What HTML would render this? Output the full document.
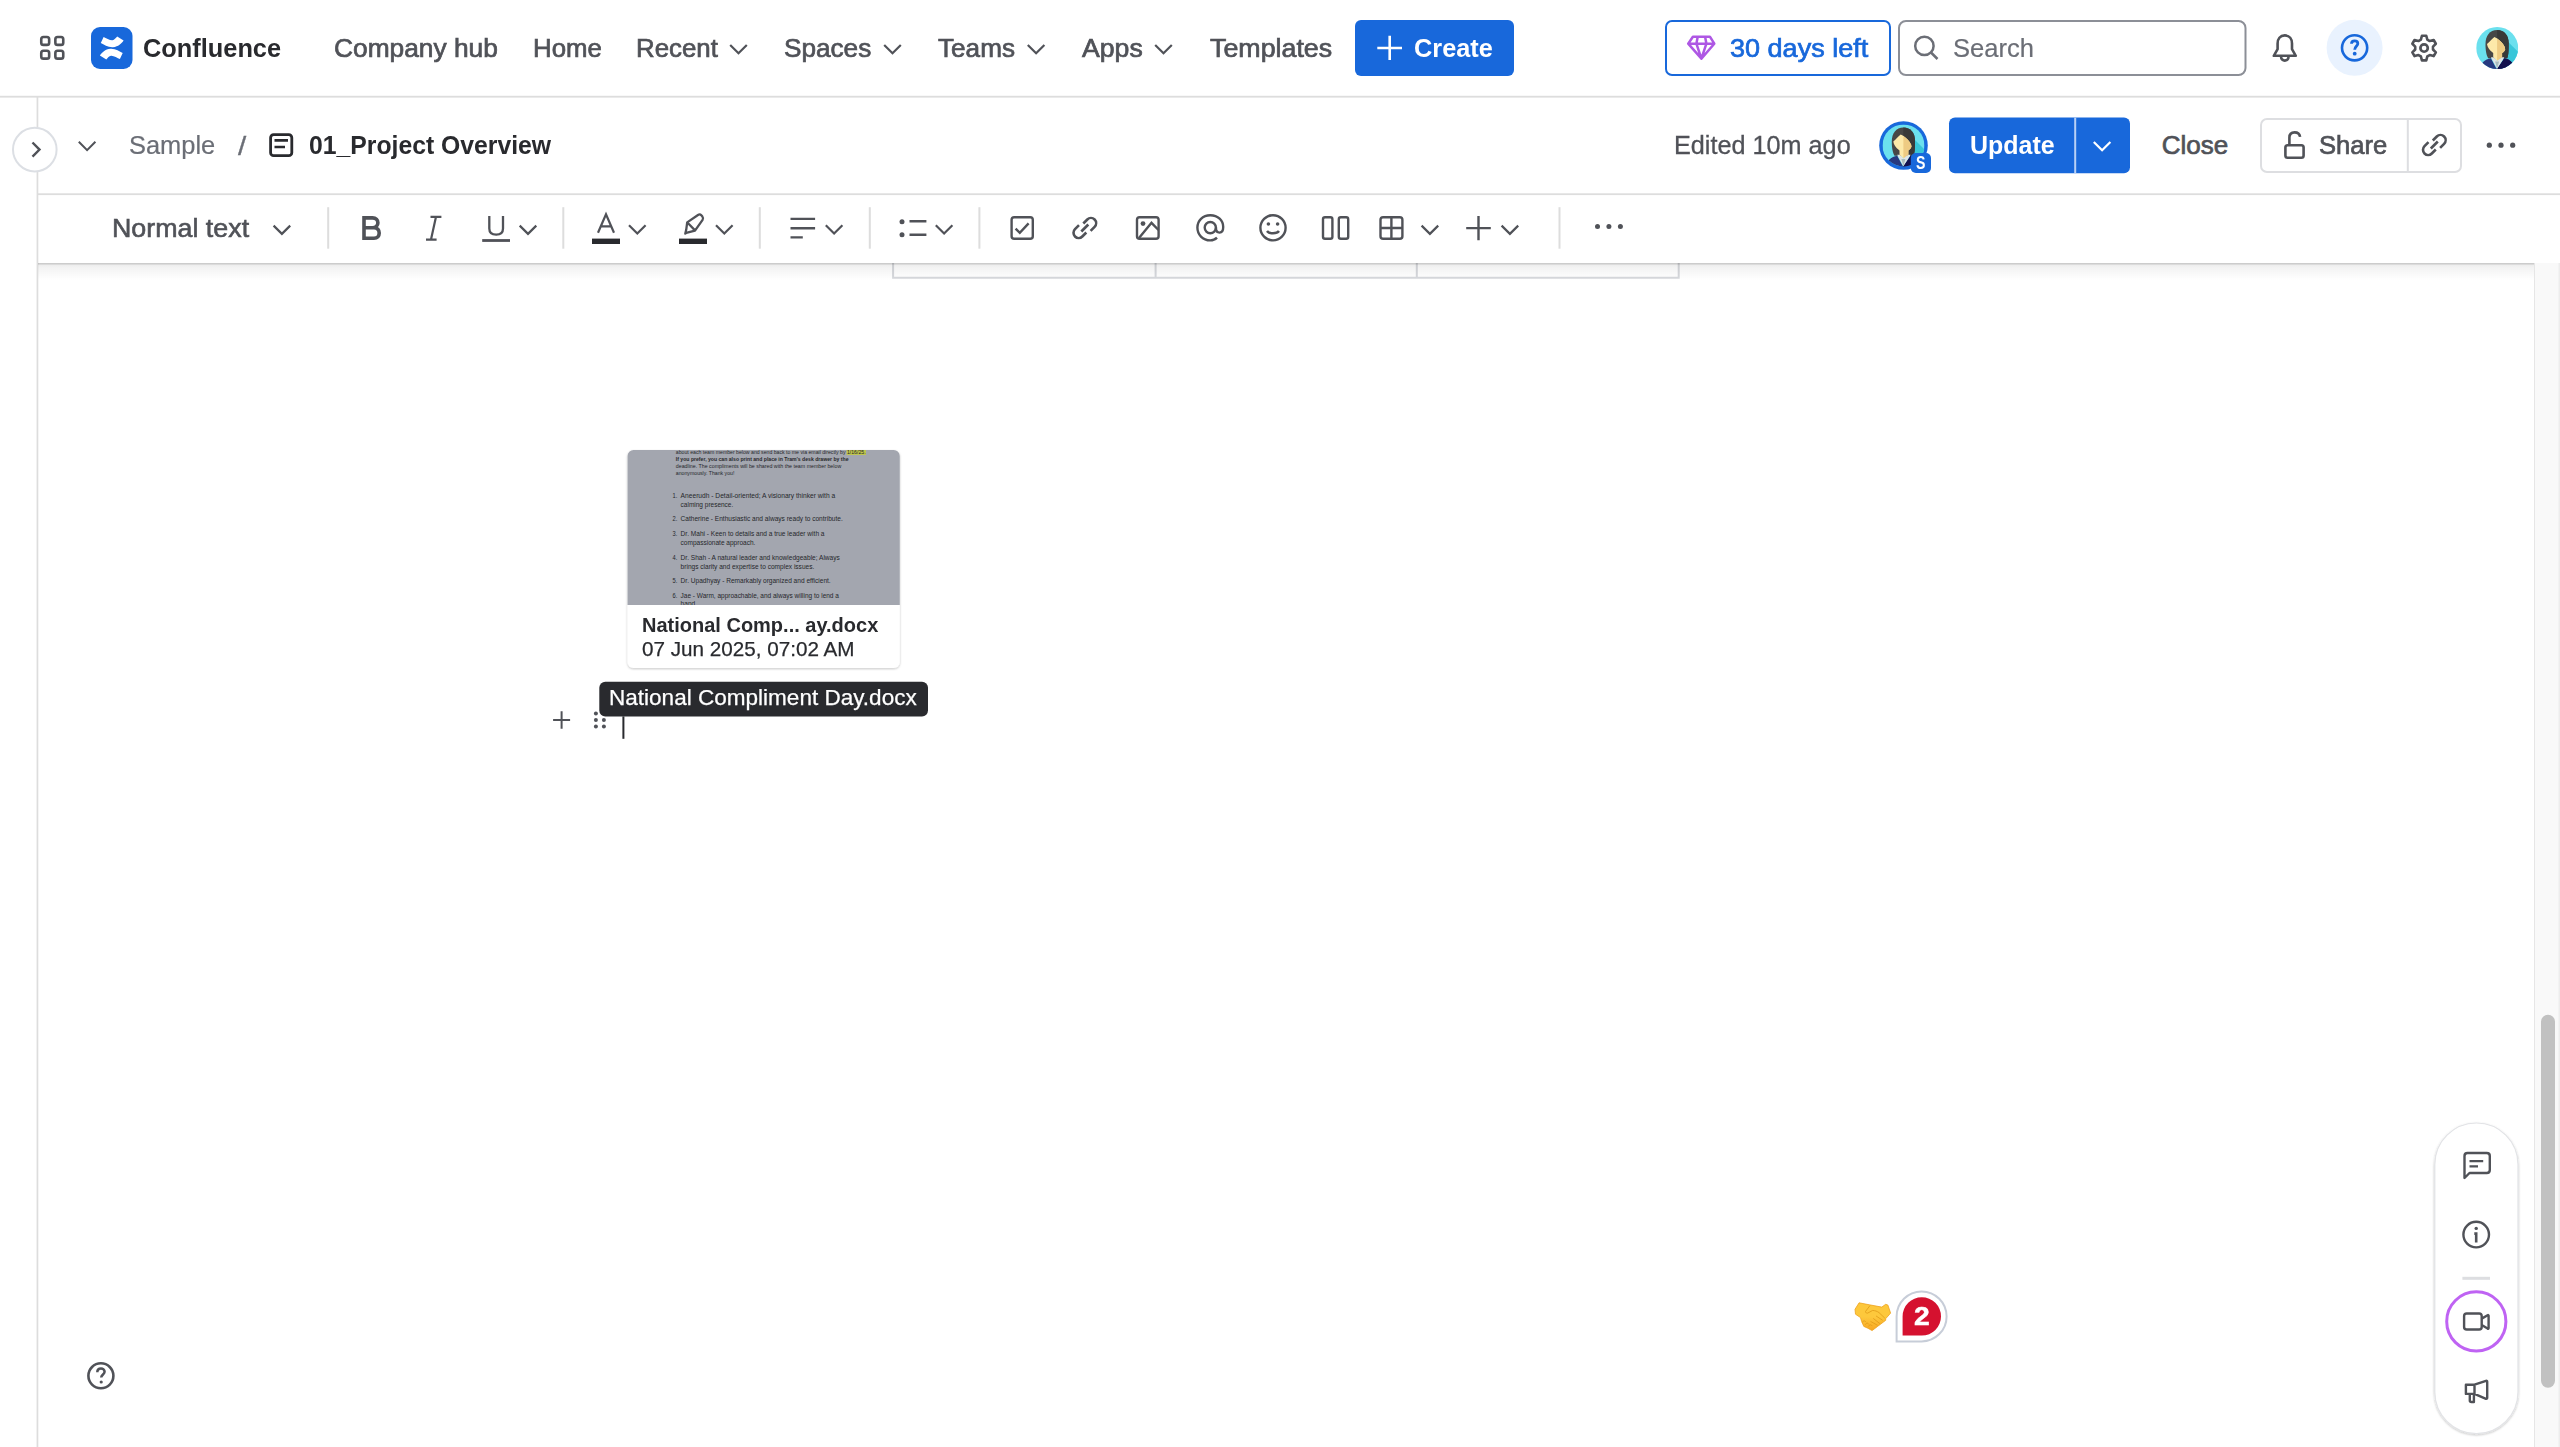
<!DOCTYPE html>
<html><head><meta charset="utf-8"><style>
html,body{margin:0;padding:0;background:#fff;width:2560px;height:1447px;overflow:hidden}
.t{position:absolute;white-space:nowrap;line-height:1;font-family:"Liberation Sans",sans-serif;transform-origin:0 0}
svg{position:absolute;left:0;top:0}
</style></head><body>
<svg width="2560" height="1447" viewBox="0 0 2560 1447" font-family="Liberation Sans">
<rect x="0" y="95.8" width="2560" height="1.8" fill="#DDDDDD"/>
<rect x="36.6" y="97" width="1.7" height="1350" fill="#DDDDDD"/>
<rect x="37" y="193.3" width="2523" height="1.8" fill="#DDDDDD"/>
<defs><linearGradient id="sh" x1="0" y1="0" x2="0" y2="1"><stop offset="0" stop-color="#000" stop-opacity="0.09"/><stop offset="0.25" stop-color="#000" stop-opacity="0.05"/><stop offset="1" stop-color="#000" stop-opacity="0"/></linearGradient></defs>
<rect x="41.25" y="36.95" width="7.9" height="7.9" rx="2.2" fill="none" stroke="#505258" stroke-width="2.6"/>
<rect x="55.35" y="36.95" width="7.9" height="7.9" rx="2.2" fill="none" stroke="#505258" stroke-width="2.6"/>
<rect x="41.25" y="50.75" width="7.9" height="7.9" rx="2.2" fill="none" stroke="#505258" stroke-width="2.6"/>
<rect x="55.35" y="50.75" width="7.9" height="7.9" rx="2.2" fill="none" stroke="#505258" stroke-width="2.6"/>
<rect x="91" y="27" width="41.5" height="42" rx="9" fill="#1868DB"/>
<g transform="translate(91 27)"><path d="M9.8 16 L12.6 10 C15 11 19 13.6 21.5 13.3 C23.5 13 24.6 11.2 26.2 9.6 L32.6 13.6 C30.4 16.6 27.5 19.8 22 20.3 C17 20.6 13 17.6 9.8 16 Z" fill="#fff"/><path d="M9.8 16 L12.6 10 C15 11 19 13.6 21.5 13.3 C23.5 13 24.6 11.2 26.2 9.6 L32.6 13.6 C30.4 16.6 27.5 19.8 22 20.3 C17 20.6 13 17.6 9.8 16 Z" fill="#fff" transform="rotate(180 20.75 21)"/></g>
<path d="M730.2 45 l8.3 8.3 l8.3 -8.3" fill="none" stroke="#505258" stroke-width="2.2"/>
<path d="M884.2 45 l8.3 8.3 l8.3 -8.3" fill="none" stroke="#505258" stroke-width="2.2"/>
<path d="M1027.8 45 l8.3 8.3 l8.3 -8.3" fill="none" stroke="#505258" stroke-width="2.2"/>
<path d="M1155.2 45 l8.3 8.3 l8.3 -8.3" fill="none" stroke="#505258" stroke-width="2.2"/>
<rect x="1355" y="20" width="159" height="56" rx="6" fill="#1868DB"/>
<path d="M1389.7 35.8 V60 M1377.3 48 H1402" stroke="#fff" stroke-width="2.6"/>
<rect x="1666" y="21" width="224" height="54" rx="6" fill="none" stroke="#1868DB" stroke-width="2"/>
<g fill="none" stroke="#AE57E4" stroke-width="2.5" stroke-linejoin="round"><path d="M1692.9 36.7 H1709.9 L1714.3 43.7 L1701.4 58.6 L1688.2 43.7 Z M1688.2 43.7 H1714.3 M1697.7 36.7 L1696.4 43.7 L1701.4 58.6 L1706.4 43.7 L1705.1 36.7"/></g>
<rect x="1899" y="21" width="346.5" height="54" rx="7" fill="none" stroke="#8C8F97" stroke-width="2"/>
<circle cx="1924.4" cy="45.9" r="9.2" fill="none" stroke="#6B6E76" stroke-width="2.5"/><path d="M1931 52.5 L1937.5 59" stroke="#6B6E76" stroke-width="2.5"/>
<path d="M2284.8 35.4 C2280 35.4 2277.6 39 2277.6 43.5 V49.2 L2273.8 55.8 H2295.8 L2292 49.2 V43.5 C2292 39 2289.6 35.4 2284.8 35.4 Z M2281.1 56.9 A3.7 3.7 0 0 0 2288.5 56.9" fill="none" stroke="#505258" stroke-width="2.6" stroke-linejoin="round"/>
<circle cx="2354.6" cy="47.8" r="28" fill="#E9F2FE"/>
<circle cx="2354.6" cy="47.8" r="12.6" fill="none" stroke="#1868DB" stroke-width="2.6"/>
<path d="M2351.5 43.8 C2351.5 41.7 2352.9 40.9 2354.6 40.9 C2356.5 40.9 2357.8 42 2357.8 43.7 C2357.8 45.8 2354.7 46.4 2354.7 49.8" fill="none" stroke="#1868DB" stroke-width="2.8"/><circle cx="2354.7" cy="53.7" r="1.9" fill="#1868DB"/>
<path d="M2420.87 39.65 L2421.93 35.74 L2426.27 35.74 L2427.33 39.65 L2429.76 41.06 L2433.68 40.02 L2435.85 43.77 L2432.99 46.64 L2432.99 49.46 L2435.85 52.33 L2433.68 56.08 L2429.76 55.04 L2427.33 56.45 L2426.27 60.36 L2421.93 60.36 L2420.87 56.45 L2418.44 55.04 L2414.52 56.08 L2412.35 52.33 L2415.21 49.46 L2415.21 46.64 L2412.35 43.77 L2414.52 40.02 L2418.44 41.06 Z" fill="none" stroke="#505258" stroke-width="2.6" stroke-linejoin="round"/><circle cx="2424.1" cy="48.05" r="3.7" fill="none" stroke="#505258" stroke-width="2.7"/>
<g transform="translate(2476.2 27) scale(1.0)"><clipPath id="av2476"><circle cx="21" cy="21" r="21"/></clipPath><g clip-path="url(#av2476)">
<rect width="42" height="42" fill="#6BE0EE"/><path d="M31 14 L50 33 L42 44 L30 44 Z" fill="#38C6D9"/>
<path d="M20.9 3.1 C13.5 3.1 9.3 9 9.3 17 C9.3 24 10.2 28 12 31.3 H31 C32.3 28 32.5 24 32.5 16.3 C32.5 8.5 28 3.1 20.9 3.1 Z" fill="#474747"/>
<path d="M20.9 3.1 C28 3.1 32.5 8.5 32.5 16.3 C32.5 24 32.3 28 31 31.3 H20.9 Z" fill="#393939"/>
<path d="M10.8 17 C13.5 14.5 16 12 18.2 10 C22 11.5 26.5 15.5 28.6 20.1 L29 22.4 C28 24.5 27 25.5 25.9 26 V30.2 L20.9 34 L17 30.2 V26 C15 24.5 13.5 23 12.4 21.3 C11.6 20 11 18.5 10.8 17 Z" fill="#FDE9A9"/>
<path d="M20.9 11.8 C24 13.5 27.2 16.8 28.6 20.1 L29 22.4 C28 24.5 27 25.5 25.9 26 V30.2 L20.9 34 Z" fill="#EECB83"/>
<path d="M6.6 35.2 C9 33 12 31.8 14.7 31.3 L20.1 41.4 L21.7 41.4 L28.1 31.3 C31 31.8 33.5 33 35.6 35.2 L38 44 H4 Z" fill="#27397F"/>
<path d="M20.9 41.4 L28.1 31.3 C31 31.8 33.5 33 35.6 35.2 L38 44 H20.9 Z" fill="#13114E"/>
<path d="M14.7 30.2 L17 30.2 L20.9 34 L25.9 30.2 L28.1 30.2 L20.9 41.8 Z" fill="#E1E5E6"/>
<path d="M18.9 34.5 H22.9 L20.9 41.8 Z" fill="#A9BDBE"/>
</g></g>
<circle cx="34.8" cy="149.6" r="21.8" fill="#fff" stroke="#DCDFE4" stroke-width="2"/>
<path d="M32.5 142.5 L39.5 149.6 L32.5 156.7" fill="none" stroke="#505258" stroke-width="2.4"/>
<path d="M78.8 141.8 l8.3 8.3 l8.3 -8.3" fill="none" stroke="#505258" stroke-width="2"/>
<rect x="270.6" y="134.7" width="21.2" height="21" rx="3" fill="none" stroke="#292A2E" stroke-width="2.8"/><path d="M274.5 140.4 H288 M274.5 147 H285" stroke="#292A2E" stroke-width="2.6"/>
<circle cx="1903.5" cy="145.45" r="24.3" fill="#1868DB"/>
<g transform="translate(1882.5 124.44999999999999) scale(1.0)"><clipPath id="av1882"><circle cx="21" cy="21" r="21"/></clipPath><g clip-path="url(#av1882)">
<rect width="42" height="42" fill="#6BE0EE"/><path d="M31 14 L50 33 L42 44 L30 44 Z" fill="#38C6D9"/>
<path d="M20.9 3.1 C13.5 3.1 9.3 9 9.3 17 C9.3 24 10.2 28 12 31.3 H31 C32.3 28 32.5 24 32.5 16.3 C32.5 8.5 28 3.1 20.9 3.1 Z" fill="#474747"/>
<path d="M20.9 3.1 C28 3.1 32.5 8.5 32.5 16.3 C32.5 24 32.3 28 31 31.3 H20.9 Z" fill="#393939"/>
<path d="M10.8 17 C13.5 14.5 16 12 18.2 10 C22 11.5 26.5 15.5 28.6 20.1 L29 22.4 C28 24.5 27 25.5 25.9 26 V30.2 L20.9 34 L17 30.2 V26 C15 24.5 13.5 23 12.4 21.3 C11.6 20 11 18.5 10.8 17 Z" fill="#FDE9A9"/>
<path d="M20.9 11.8 C24 13.5 27.2 16.8 28.6 20.1 L29 22.4 C28 24.5 27 25.5 25.9 26 V30.2 L20.9 34 Z" fill="#EECB83"/>
<path d="M6.6 35.2 C9 33 12 31.8 14.7 31.3 L20.1 41.4 L21.7 41.4 L28.1 31.3 C31 31.8 33.5 33 35.6 35.2 L38 44 H4 Z" fill="#27397F"/>
<path d="M20.9 41.4 L28.1 31.3 C31 31.8 33.5 33 35.6 35.2 L38 44 H20.9 Z" fill="#13114E"/>
<path d="M14.7 30.2 L17 30.2 L20.9 34 L25.9 30.2 L28.1 30.2 L20.9 41.8 Z" fill="#E1E5E6"/>
<path d="M18.9 34.5 H22.9 L20.9 41.8 Z" fill="#A9BDBE"/>
</g></g>
<rect x="1910.8" y="153.1" width="20.2" height="19.9" rx="5" fill="#1868DB"/>
<rect x="1949" y="117.6" width="181" height="55.6" rx="6" fill="#1868DB"/>
<rect x="2074.2" y="117.6" width="2" height="55.6" fill="#B8D0F5"/>
<path d="M2093.8 142 l8.3 8.3 l8.3 -8.3" fill="none" stroke="#fff" stroke-width="2.2"/>
<rect x="2261" y="119" width="200" height="53" rx="6" fill="none" stroke="#DDDEE1" stroke-width="2"/>
<rect x="2406.8" y="119" width="2" height="53" fill="#DDDEE1"/>
<path d="M2289.4 145 V137.6 C2289.4 134.1 2291.5 132.4 2294.6 132.4 C2297.6 132.4 2299.7 134.1 2300.1 136.9" fill="none" stroke="#505258" stroke-width="2.6"/><rect x="2285.4" y="145.2" width="18.2" height="12.6" rx="2.2" fill="none" stroke="#505258" stroke-width="2.6"/>
<g transform="translate(2422.3 133) scale(1)" fill="none" stroke="#505258" stroke-width="2.6" stroke-linecap="butt"><path d="M10.5 7.5 L14.5 3.5 C16.5 1.5 19.8 1.5 21.8 3.5 C23.8 5.5 23.8 8.8 21.8 10.8 L17.8 14.8"/><path d="M13.5 16.5 L9.5 20.5 C7.5 22.5 4.2 22.5 2.2 20.5 C0.2 18.5 0.2 15.2 2.2 13.2 L6.2 9.2"/><path d="M8.5 15.5 L15.5 8.5"/></g>
<circle cx="2489.3" cy="145.2" r="2.6" fill="#505258"/>
<circle cx="2501" cy="145.2" r="2.6" fill="#505258"/>
<circle cx="2512.7" cy="145.2" r="2.6" fill="#505258"/>
<rect x="327.2" y="207.2" width="2" height="41.5" fill="#DDDDDD"/>
<rect x="562.3" y="207.2" width="2" height="41.5" fill="#DDDDDD"/>
<rect x="758.8" y="207.2" width="2" height="41.5" fill="#DDDDDD"/>
<rect x="868.8" y="207.2" width="2" height="41.5" fill="#DDDDDD"/>
<rect x="978.4" y="207.2" width="2" height="41.5" fill="#DDDDDD"/>
<rect x="1558.5" y="207.2" width="2" height="41.5" fill="#DDDDDD"/>
<path d="M273.6 225.6 l8.3 8.3 l8.3 -8.3" fill="none" stroke="#505258" stroke-width="2.2"/>
<path d="M364 238.3 V217.9 H372.5 C376 217.9 377.9 220 377.9 222.8 C377.9 225.6 376 227.7 372.5 227.7 H364 M372.5 227.7 H374 C377.4 227.7 379.2 230 379.2 233 C379.2 236 377.4 238.3 374 238.3 H364" fill="none" stroke="#505258" stroke-width="3.6" stroke-linecap="square"/>
<path d="M430.5 216.8 H441.4 M426 239.6 H436.6 M436 216.8 L431 239.6" fill="none" stroke="#505258" stroke-width="2.2"/>
<path d="M489.3 216 V228.5 C489.3 232.8 492.5 234.6 496.2 234.6 C499.8 234.6 503 232.8 503 228.5 V216" fill="none" stroke="#505258" stroke-width="2.3"/><rect x="482.2" y="239.1" width="27.8" height="2.8" fill="#505258"/>
<path d="M519.7 225.6 l8.3 8.3 l8.3 -8.3" fill="none" stroke="#505258" stroke-width="2.2"/>
<path d="M598 232.8 L606 214.2 L614 232.8 M600.6 226.4 H611.4" fill="none" stroke="#505258" stroke-width="2.2"/><rect x="592" y="238.6" width="28" height="5.4" fill="#292A2E"/>
<path d="M629 225.2 l8.3 8.3 l8.3 -8.3" fill="none" stroke="#505258" stroke-width="2.2"/>
<path d="M687.2 222.4 L698 215 C699.2 214.2 700.5 214.4 701.3 215.3 L702.4 216.6 C703.2 217.6 703.3 218.8 702.6 219.8 L695 230.6 L687.2 232.6 L685.3 233.6 L686.2 229.8 Z M687.6 222.8 L695 230.4" fill="none" stroke="#505258" stroke-width="2.3" stroke-linejoin="round"/><rect x="679" y="238.6" width="28" height="5.4" fill="#292A2E"/>
<path d="M716 225.2 l8.3 8.3 l8.3 -8.3" fill="none" stroke="#505258" stroke-width="2.2"/>
<path d="M790.5 218.9 H815.1 M790.5 228.2 H815.1 M790.5 237.4 H802.8" stroke="#505258" stroke-width="2.4"/>
<path d="M825.8 225.2 l8.3 8.3 l8.3 -8.3" fill="none" stroke="#505258" stroke-width="2.2"/>
<circle cx="902" cy="221.8" r="2.5" fill="#505258"/><circle cx="902" cy="234.7" r="2.5" fill="#505258"/><path d="M909.5 221.3 H926.4 M909.5 234.8 H926.4" stroke="#505258" stroke-width="2.4"/>
<path d="M935.8 225.2 l8.3 8.3 l8.3 -8.3" fill="none" stroke="#505258" stroke-width="2.2"/>
<rect x="1011.6" y="217.2" width="21.2" height="21.6" rx="2.6" fill="none" stroke="#505258" stroke-width="2.4"/><path d="M1015.6 228.6 L1019.8 232.8 L1028.6 223.4" fill="none" stroke="#505258" stroke-width="2.4"/>
<g transform="translate(1072.8 216) scale(1)" fill="none" stroke="#505258" stroke-width="2.6" stroke-linecap="butt"><path d="M10.5 7.5 L14.5 3.5 C16.5 1.5 19.8 1.5 21.8 3.5 C23.8 5.5 23.8 8.8 21.8 10.8 L17.8 14.8"/><path d="M13.5 16.5 L9.5 20.5 C7.5 22.5 4.2 22.5 2.2 20.5 C0.2 18.5 0.2 15.2 2.2 13.2 L6.2 9.2"/><path d="M8.5 15.5 L15.5 8.5"/></g>
<rect x="1137" y="217.2" width="21.6" height="21.6" rx="2.6" fill="none" stroke="#505258" stroke-width="2.4"/><circle cx="1143" cy="223.6" r="2.4" fill="#505258"/><path d="M1139 238 L1151.5 222.8 L1158.5 230" fill="none" stroke="#505258" stroke-width="2.4"/>
<path d="M1217 237.6 C1215 239.6 1212.7 240.4 1210.3 240.4 C1202.6 240.4 1197.4 234.6 1197.4 227.6 C1197.4 220.6 1202.6 215.2 1210.3 215.2 C1218 215.2 1223.2 220.6 1223.2 227 C1223.2 230.8 1221.6 232.6 1219.6 232.6 C1217.6 232.6 1216 231.4 1216 228.6 V227.6" fill="none" stroke="#505258" stroke-width="2.4"/><circle cx="1210.3" cy="227.6" r="5.6" fill="none" stroke="#505258" stroke-width="2.4"/>
<circle cx="1273" cy="227.8" r="12.6" fill="none" stroke="#505258" stroke-width="2.4"/><circle cx="1268.4" cy="224" r="1.8" fill="#505258"/><circle cx="1277.6" cy="224" r="1.8" fill="#505258"/><path d="M1267 231 C1269 234 1277 234 1279 231" fill="none" stroke="#505258" stroke-width="2.4"/>
<rect x="1323" y="217.2" width="9.4" height="21.6" rx="2" fill="none" stroke="#505258" stroke-width="2.4"/><rect x="1338.8" y="217.2" width="9.4" height="21.6" rx="2" fill="none" stroke="#505258" stroke-width="2.4"/>
<rect x="1380.5" y="217.2" width="21.9" height="21.6" rx="2.6" fill="none" stroke="#505258" stroke-width="2.4"/><path d="M1391.4 217.2 V238.8 M1380.5 228 H1402.4" stroke="#505258" stroke-width="2.4"/>
<path d="M1421.6 225.6 l8.3 8.3 l8.3 -8.3" fill="none" stroke="#505258" stroke-width="2.2"/>
<path d="M1478.5 216 V240.2 M1466.2 228.1 H1490.8" stroke="#505258" stroke-width="2.4"/>
<path d="M1501.6 225.6 l8.3 8.3 l8.3 -8.3" fill="none" stroke="#505258" stroke-width="2.2"/>
<circle cx="1597.5" cy="226.5" r="2.5" fill="#505258"/>
<circle cx="1608.9" cy="226.5" r="2.5" fill="#505258"/>
<circle cx="1620.4" cy="226.5" r="2.5" fill="#505258"/>
<path d="M893.1 263 V277.8 H1678.7 V263 M1155.6 263 V277.8 M1416.8 263 V277.8" fill="none" stroke="#D6D8DC" stroke-width="2"/>
<rect x="38" y="263" width="2522" height="17" fill="url(#sh)"/><rect x="38" y="263" width="2522" height="1.6" fill="#000" opacity="0.12"/>
<defs><filter id="cs" x="-10%" y="-10%" width="120%" height="130%"><feDropShadow dx="0" dy="1" stdDeviation="1" flood-color="#1E1F21" flood-opacity="0.25"/></filter></defs>
<rect x="627.5" y="450" width="272.3" height="218" rx="6" fill="#fff" filter="url(#cs)"/>
<clipPath id="cimg"><path d="M627.5 605 V456 A6 6 0 0 1 633.5 450 H893.8 A6 6 0 0 1 899.8 456 V605 Z"/></clipPath>
<g clip-path="url(#cimg)"><rect x="627" y="450" width="273" height="155" fill="#A3A6AF"/>
<rect x="846.5" y="447.5" width="19.5" height="7.5" fill="#C8CF2E" opacity="0.75"/>
<text x="675.8" y="453.5" font-family="Liberation Sans" font-size="6.2" fill="#26272B" textLength="189.8" lengthAdjust="spacingAndGlyphs" >about each team member below and send back to me via email directly by 1/16/25.</text>
<text x="675.8" y="460.8" font-family="Liberation Sans" font-size="6.2" fill="#26272B" textLength="172.7" lengthAdjust="spacingAndGlyphs" font-weight="bold">If you prefer, you can also print and place in Tram’s desk drawer by the</text>
<text x="675.8" y="467.6" font-family="Liberation Sans" font-size="6.2" fill="#26272B" textLength="165.4" lengthAdjust="spacingAndGlyphs" >deadline. The compliments will be shared with the team member below</text>
<text x="675.8" y="474.9" font-family="Liberation Sans" font-size="6.2" fill="#26272B" textLength="58.6" lengthAdjust="spacingAndGlyphs" >anonymously. Thank you!</text>
<text x="672.6" y="498" font-family="Liberation Sans" font-size="7.2" fill="#26272B" textLength="4.8" lengthAdjust="spacingAndGlyphs" >1.</text>
<text x="680.6" y="498" font-family="Liberation Sans" font-size="7.2" fill="#26272B" textLength="154.6" lengthAdjust="spacingAndGlyphs" >Aneerudh - Detail-oriented; A visionary thinker with a</text>
<text x="680.6" y="507.1" font-family="Liberation Sans" font-size="7.2" fill="#26272B" textLength="52.7" lengthAdjust="spacingAndGlyphs" >calming presence.</text>
<text x="672.6" y="521.2" font-family="Liberation Sans" font-size="7.2" fill="#26272B" textLength="4.8" lengthAdjust="spacingAndGlyphs" >2.</text>
<text x="680.6" y="521.2" font-family="Liberation Sans" font-size="7.2" fill="#26272B" textLength="162.2" lengthAdjust="spacingAndGlyphs" >Catherine - Enthusiastic and always ready to contribute.</text>
<text x="672.6" y="536" font-family="Liberation Sans" font-size="7.2" fill="#26272B" textLength="4.8" lengthAdjust="spacingAndGlyphs" >3.</text>
<text x="680.6" y="536" font-family="Liberation Sans" font-size="7.2" fill="#26272B" textLength="143.9" lengthAdjust="spacingAndGlyphs" >Dr. Mahi - Keen to details and a true leader with a</text>
<text x="680.6" y="544.5" font-family="Liberation Sans" font-size="7.2" fill="#26272B" textLength="74.8" lengthAdjust="spacingAndGlyphs" >compassionate approach.</text>
<text x="672.6" y="559.6" font-family="Liberation Sans" font-size="7.2" fill="#26272B" textLength="4.8" lengthAdjust="spacingAndGlyphs" >4.</text>
<text x="680.6" y="559.6" font-family="Liberation Sans" font-size="7.2" fill="#26272B" textLength="159.2" lengthAdjust="spacingAndGlyphs" >Dr. Shah - A natural leader and knowledgeable; Always</text>
<text x="680.6" y="568.7" font-family="Liberation Sans" font-size="7.2" fill="#26272B" textLength="133.7" lengthAdjust="spacingAndGlyphs" >brings clarity and expertise to complex issues.</text>
<text x="672.6" y="582.8" font-family="Liberation Sans" font-size="7.2" fill="#26272B" textLength="4.8" lengthAdjust="spacingAndGlyphs" >5.</text>
<text x="680.6" y="582.8" font-family="Liberation Sans" font-size="7.2" fill="#26272B" textLength="150.1" lengthAdjust="spacingAndGlyphs" >Dr. Upadhyay - Remarkably organized and efficient.</text>
<text x="672.6" y="597.7" font-family="Liberation Sans" font-size="7.2" fill="#26272B" textLength="4.8" lengthAdjust="spacingAndGlyphs" >6.</text>
<text x="680.6" y="597.7" font-family="Liberation Sans" font-size="7.2" fill="#26272B" textLength="158.3" lengthAdjust="spacingAndGlyphs" >Jae - Warm, approachable, and always willing to lend a</text>
<text x="680.6" y="606.1" font-family="Liberation Sans" font-size="7.2" fill="#26272B" textLength="16.4" lengthAdjust="spacingAndGlyphs" >hand.</text>
</g>
<rect x="599.3" y="681.8" width="328.7" height="34.6" rx="6" fill="#292A2E"/>
<path d="M561.6 711.3 V728.7 M553.1 720 H570.1" stroke="#505258" stroke-width="2"/>
<circle cx="595.9" cy="713.5" r="2" fill="#505258"/>
<circle cx="595.9" cy="720.1" r="2" fill="#505258"/>
<circle cx="603.9" cy="720.1" r="2" fill="#505258"/>
<circle cx="595.9" cy="726.6" r="2" fill="#505258"/>
<circle cx="603.9" cy="726.6" r="2" fill="#505258"/>
<rect x="622.4" y="716.4" width="2" height="22.4" fill="#292A2E"/>
<circle cx="100.9" cy="1375.8" r="12.5" fill="none" stroke="#505258" stroke-width="2.6"/><path d="M97.3 1372.2 C97.3 1369.6 99 1368.4 101 1368.4 C103 1368.4 104.6 1369.8 104.6 1371.8 C104.6 1374.4 101.2 1374.6 101.2 1377.6" fill="none" stroke="#505258" stroke-width="2.5"/><circle cx="101.2" cy="1382" r="1.6" fill="#505258"/>
<defs><linearGradient id="hs" x1="0" y1="0" x2="0" y2="1"><stop offset="0.5" stop-color="#FDC83C"/><stop offset="1" stop-color="#F8A623"/></linearGradient></defs>
<g transform="translate(1850 1296)"><path d="M9.1 6.8 L19.4 8.8 L31.8 11.1 L35.7 8.3 L37.9 9.1 L40.6 17.1 L35.7 22.7 V24.3 L27.6 30.4 L22.1 34.6 L18 32.3 L13.8 30.4 L11.6 25.4 L10.5 21.6 L5.5 18.2 L5 13.3 Z" fill="url(#hs)" stroke="#EDA21E" stroke-width="0.8" stroke-linejoin="round"/><path d="M19.9 9.7 L15.5 15.5 C15.5 16.8 16.5 17.3 17.7 17.1 L22.7 14.4 C25 14.6 27 15.2 29 16.6 L34.8 22.1 M26 19.9 L32.6 24.3 M23.2 22.4 L29.9 27.6 M20.5 25.4 L27.6 29.3 M12.3 26.6 C13 24.3 15.2 24.5 15.8 26 M15.3 28.8 C16 26.6 18.2 26.7 18.8 28.4 M18.6 30.5 C19.3 28.3 21.5 28.4 22.1 30.1" fill="none" stroke="#E09A18" stroke-width="0.8"/></g>
<path d="M1896.6 1341.4 V1316.4 A25 25 0 1 1 1921.6 1341.4 Z" fill="#fff" stroke="#C7CDD8" stroke-width="2"/>
<path d="M1902.6 1335.6 V1316.4 A19.2 19.2 0 1 1 1921.8 1335.6 Z" fill="#D5112F"/>
<defs><filter id="ps" x="-30%" y="-10%" width="160%" height="120%"><feDropShadow dx="0" dy="1" stdDeviation="1.2" flood-color="#1E1F21" flood-opacity="0.25"/></filter></defs>
<rect x="2434.8" y="1123" width="83.2" height="310.6" rx="41.6" fill="#fff" stroke="#E2E3E6" stroke-width="1.2" filter="url(#ps)"/>
<path d="M2464.5 1178 V1156 C2464.5 1154 2465.5 1153 2467.5 1153 H2486.8 C2488.8 1153 2489.8 1154 2489.8 1156 V1170 C2489.8 1172 2488.8 1173 2486.8 1173 H2469.5 Z" fill="none" stroke="#505258" stroke-width="2.4" stroke-linejoin="round"/><path d="M2469.5 1161.1 H2483.2 M2469.5 1166.4 H2478" stroke="#505258" stroke-width="2.4"/>
<circle cx="2476.2" cy="1234.6" r="12.8" fill="none" stroke="#505258" stroke-width="2.4"/><circle cx="2476.2" cy="1228.4" r="1.7" fill="#505258"/><path d="M2474.3 1233.6 H2476.2 V1242.4" fill="none" stroke="#505258" stroke-width="2.6"/>
<rect x="2462.4" y="1276.8" width="27.6" height="3" fill="#DDDEE1"/>
<circle cx="2476.3" cy="1321.4" r="29.6" fill="none" stroke="#BF63F3" stroke-width="3"/>
<rect x="2464.1" y="1313.5" width="17.6" height="16" rx="2.6" fill="none" stroke="#505258" stroke-width="2.4"/><path d="M2481.7 1318.6 L2487.6 1315.2 C2488.2 1314.9 2488.6 1315.2 2488.6 1315.8 V1328 C2488.6 1328.6 2488.2 1328.9 2487.6 1328.6 L2481.7 1325" fill="none" stroke="#505258" stroke-width="2.4" stroke-linejoin="round"/>
<path d="M2465.9 1384.7 H2474.5 V1393.9 H2465.9 Z M2474.5 1384.7 L2486 1380.8 C2486.8 1380.6 2487.2 1381 2487.2 1381.8 V1397.8 C2487.2 1398.6 2486.8 1399 2486 1398.8 L2474.5 1393.9 M2469.8 1393.9 V1400.5 C2469.8 1401.5 2470.5 1402 2471.5 1402 H2473.9 V1393.9" fill="none" stroke="#505258" stroke-width="2.4" stroke-linejoin="round"/>
<rect x="2534" y="263" width="26" height="1184" fill="#F9F9F9"/><rect x="2534" y="263" width="1" height="1184" fill="#E6E6E6"/><rect x="2558.5" y="263" width="1.5" height="1184" fill="#EDEDED"/>
<rect x="2541" y="1014.8" width="14" height="373" rx="7" fill="#C1C1C1"/>
</svg>
<div class="t" style="left:142.77px;top:34.60px;font-size:26px;color:#292A2E;font-weight:bold;transform:scaleX(0.9754);">Confluence</div>
<div class="t" style="left:334.19px;top:34.60px;font-size:26px;color:#505258;transform:scaleX(1.0125);-webkit-text-stroke:0.7px #505258;">Company hub</div>
<div class="t" style="left:532.51px;top:34.60px;font-size:26px;color:#505258;transform:scaleX(0.9925);-webkit-text-stroke:0.7px #505258;">Home</div>
<div class="t" style="left:635.81px;top:34.60px;font-size:26px;color:#505258;transform:scaleX(0.9938);-webkit-text-stroke:0.7px #505258;">Recent</div>
<div class="t" style="left:783.69px;top:34.60px;font-size:26px;color:#505258;transform:scaleX(1.0059);-webkit-text-stroke:0.7px #505258;">Spaces</div>
<div class="t" style="left:938.40px;top:34.60px;font-size:26px;color:#505258;transform:scaleX(1.0053);-webkit-text-stroke:0.7px #505258;">Teams</div>
<div class="t" style="left:1082.40px;top:34.60px;font-size:26px;color:#505258;transform:scaleX(1.0241);-webkit-text-stroke:0.7px #505258;">Apps</div>
<div class="t" style="left:1209.60px;top:34.60px;font-size:26px;color:#505258;transform:scaleX(1.0308);-webkit-text-stroke:0.7px #505258;">Templates</div>
<div class="t" style="left:1414.43px;top:34.90px;font-size:26px;color:#FFFFFF;font-weight:bold;transform:scaleX(0.9734);">Create</div>
<div class="t" style="left:1730.16px;top:34.70px;font-size:26px;color:#1868DB;transform:scaleX(1.0394);-webkit-text-stroke:0.7px #1868DB;">30 days left</div>
<div class="t" style="left:1952.72px;top:34.70px;font-size:26px;color:#6B6E76;transform:scaleX(0.9825);-webkit-text-stroke:0.2px #6B6E76;">Search</div>
<div class="t" style="left:129.12px;top:132.10px;font-size:26px;color:#6B6E76;transform:scaleX(0.9782);-webkit-text-stroke:0.2px #6B6E76;">Sample</div>
<div class="t" style="left:237.70px;top:132.50px;font-size:26px;color:#6B6E76;transform:scaleX(1.1429);-webkit-text-stroke:0.3px #6B6E76;">/</div>
<div class="t" style="left:308.65px;top:131.80px;font-size:26px;color:#292A2E;font-weight:bold;transform:scaleX(0.9518);">01_Project Overview</div>
<div class="t" style="left:1673.86px;top:132.30px;font-size:26px;color:#505258;transform:scaleX(0.9700);-webkit-text-stroke:0.3px #505258;">Edited 10m ago</div>
<div class="t" style="left:1970.04px;top:132.30px;font-size:26px;color:#FFFFFF;font-weight:bold;transform:scaleX(0.9609);">Update</div>
<div class="t" style="left:2161.70px;top:132.30px;font-size:26px;color:#505258;transform:scaleX(1.0000);-webkit-text-stroke:0.7px #505258;">Close</div>
<div class="t" style="left:2319.02px;top:132.30px;font-size:26px;color:#505258;transform:scaleX(0.9838);-webkit-text-stroke:0.7px #505258;">Share</div>
<div class="t" style="left:111.94px;top:215.20px;font-size:26px;color:#505258;transform:scaleX(1.0313);-webkit-text-stroke:0.6px #505258;">Normal text</div>
<div class="t" style="left:641.65px;top:613.60px;font-size:21px;color:#292A2E;font-weight:bold;transform:scaleX(0.9522);">National Comp... ay.docx</div>
<div class="t" style="left:641.62px;top:637.80px;font-size:21px;color:#292A2E;transform:scaleX(0.9840);-webkit-text-stroke:0.25px #292A2E;">07 Jun 2025, 07:02 AM</div>
<div class="t" style="left:609.48px;top:687.40px;font-size:22px;color:#FFFFFF;transform:scaleX(1.0244);-webkit-text-stroke:0.25px #FFFFFF;">National Compliment Day.docx</div>
<div class="t" style="left:1916.00px;top:153.60px;font-size:18px;color:#FFFFFF;font-weight:bold;transform:scaleX(0.7833);">S</div>
<div class="t" style="left:1913.82px;top:1303.20px;font-size:26px;color:#FFFFFF;font-weight:bold;transform:scaleX(1.0846);-webkit-text-stroke:0.5px #FFFFFF;">2</div>
</body></html>
